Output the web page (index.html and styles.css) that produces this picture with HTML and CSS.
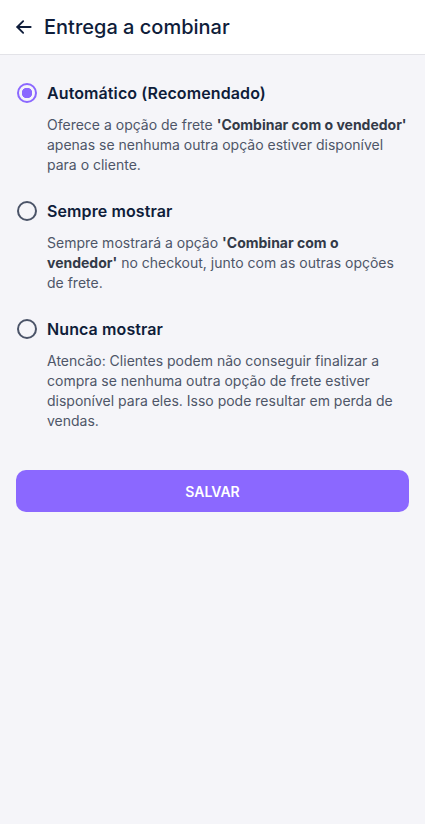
FILE: index.html
```html
<!DOCTYPE html>
<html lang="pt-BR">
<head>
    <meta charset="UTF-8">
    <meta name="viewport" content="width=device-width, initial-scale=1.0">
    <title>Entrega a combinar</title>
    <link rel="stylesheet" href="styles.css">
</head>
<body>

    <header class="top-bar">
        <button class="back-button" aria-label="Voltar">
            <svg width="20" height="20" viewBox="0 0 24 24" fill="none" stroke="currentColor" stroke-width="2.2" stroke-linecap="round" stroke-linejoin="round">
                <path d="M20 12H4"/>
                <path d="M11 5l-7 7 7 7"/>
            </svg>
        </button>
        <h1>Entrega a combinar</h1>
    </header>

    <main class="content">
        <label class="option">
            <span class="option-head">
                <input type="radio" name="mode" checked>
                <span class="radio"></span>
                <span class="option-title">Automático (Recomendado)</span>
            </span>
            <span class="option-desc">Oferece a opção de frete <b>'Combinar com o vendedor'</b> apenas se nenhuma outra opção estiver disponível para o cliente.</span>
        </label>

        <label class="option">
            <span class="option-head">
                <input type="radio" name="mode">
                <span class="radio"></span>
                <span class="option-title">Sempre mostrar</span>
            </span>
            <span class="option-desc">Sempre mostrará a opção <b>'Combinar com o</b> <b>vendedor'</b> no checkout, junto com as outras opções de frete.</span>
        </label>

        <label class="option">
            <span class="option-head">
                <input type="radio" name="mode">
                <span class="radio"></span>
                <span class="option-title">Nunca mostrar</span>
            </span>
            <span class="option-desc">Atencão: Clientes podem não conseguir finalizar a compra se nenhuma outra opção de frete estiver disponível para eles. Isso pode resultar em perda de vendas.</span>
        </label>

        <button class="save-button">SALVAR</button>
    </main>

</body>
</html>
```

FILE: styles.css
```css
body {
    margin: 0;
    background-color: #f5f5f9;
    font-family: Inter, 'Noto Sans', sans-serif;
    color: #0f1d3a;
}
.top-bar {
    display: flex;
    align-items: center;
    gap: 10px;
    height: 54px;
    padding: 0 16px 0 14px;
    background-color: #fff;
    border-bottom: 1px solid #e3e3e8;
}
.back-button {
    display: flex;
    padding: 0;
    border: none;
    background: none;
    color: #0f1d3a;
    cursor: pointer;
}
.top-bar h1 {
    margin: 0;
    font-size: 20px;
    font-weight: 500;
}
.content {
    padding: 24px 16px;
}
.option {
    display: block;
    margin-bottom: 22px;
    cursor: pointer;
}
.option-head {
    display: flex;
    align-items: center;
    height: 28px;
}
.option input {
    display: none;
}
.radio {
    box-sizing: border-box;
    width: 20px;
    height: 20px;
    margin: 0 10px 0 1px;
    border: 2px solid #4b5468;
    border-radius: 50%;
    flex-shrink: 0;
}
.option input:checked + .radio {
    border-color: #8b68ff;
    background: radial-gradient(circle, #8b68ff 5px, transparent 5.5px);
}
.option-title {
    font-size: 16px;
    font-weight: 600;
    letter-spacing: 0.1px;
}
.option-desc {
    display: block;
    margin: 8px 0 0 31px;
    font-size: 14px;
    line-height: 20px;
    color: #4e5668;
}
.option-desc b {
    font-weight: 700;
    color: #333a48;
}
.save-button {
    display: block;
    width: 100%;
    height: 42px;
    margin-top: 39px;
    border: none;
    border-radius: 10px;
    background-color: #8b68ff;
    color: #fff;
    font-family: Inter, 'Noto Sans', sans-serif;
    font-size: 14px;
    font-weight: 600;
    cursor: pointer;
}
```
